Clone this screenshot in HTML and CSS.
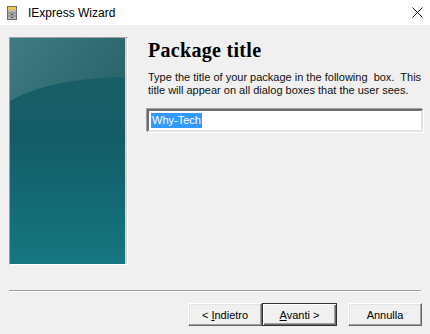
FILE: index.html
```html
<!DOCTYPE html>
<html lang="it">
<head>
    <meta charset="UTF-8">
    <title>IExpress Wizard</title>
    <link rel="stylesheet" href="styles.css">
</head>
<body>
    <div class="titlebar">
        <svg class="app-icon" width="10" height="14" viewBox="0 0 10 14">
            <rect x="0.5" y="0.5" width="9" height="13" fill="#b8b8b8" stroke="#6f6f6f"/>
            <rect x="1" y="1" width="8" height="3" fill="#e8c84a"/>
            <line x1="1" y1="7" x2="9" y2="7" stroke="#7a7a7a"/>
            <line x1="1" y1="10" x2="9" y2="10" stroke="#7a7a7a"/>
            <rect x="4" y="8" width="2" height="1" fill="#444"/>
            <rect x="4" y="11" width="2" height="1" fill="#444"/>
        </svg>
        <span class="title">IExpress Wizard</span>
        <svg class="close" width="11" height="11" viewBox="0 0 11 11">
            <path d="M0.5 0.5 L10.5 10.5 M10.5 0.5 L0.5 10.5" stroke="#111" stroke-width="1"/>
        </svg>
    </div>

    <div class="main">
        <div class="panel">
            <svg width="115" height="226" viewBox="0 0 115 226" preserveAspectRatio="none">
                <defs>
                    <linearGradient id="bg" x1="0" y1="0" x2="0" y2="1">
                        <stop offset="0" stop-color="#1c5e66"/>
                        <stop offset="0.45" stop-color="#135d68"/>
                        <stop offset="1" stop-color="#147780"/>
                    </linearGradient>
                    <linearGradient id="top" x1="0" y1="0" x2="1" y2="0.4">
                        <stop offset="0" stop-color="#3f7c81"/>
                        <stop offset="1" stop-color="#2a666c"/>
                    </linearGradient>
                </defs>
                <rect width="115" height="226" fill="url(#bg)"/>
                <path d="M0 0 H115 V39 Q40 40 0 63 Z" fill="url(#top)"/>
            </svg>
            <div class="panel-edge"></div>
        </div>

        <div class="content">
            <h1>Package title</h1>
            <p class="desc">Type the title of your package in the following&nbsp; box.&nbsp; This<br>title will appear on all dialog boxes that the user sees.</p>
            <div class="field">
                <span class="caret"></span><span class="sel">Why-Tech</span>
            </div>
        </div>
    </div>

    <div class="separator"></div>

    <div class="buttons">
        <button class="btn">&lt; <u>I</u>ndietro</button>
        <button class="btn default"><u>A</u>vanti &gt;</button>
        <button class="btn cancel">Annulla</button>
    </div>
</body>
</html>
```

FILE: styles.css
```css
body {
    margin: 0;
    width: 430px;
    height: 334px;
    overflow: hidden;
    background-color: #f0f0f0;
    font-family: "Liberation Sans", Arial, sans-serif;
    font-size: 11px;
    color: #000;
}

.titlebar {
    height: 25px;
    background-color: #fff;
    display: flex;
    align-items: center;
    padding-left: 7px;
}

.app-icon {
    margin-right: 11px;
}

.title {
    font-size: 12px;
    color: #000;
}

.close {
    margin-left: auto;
    margin-right: 7px;
}

.main {
    display: flex;
    padding: 12px 0 0 9px;
}

.panel {
    display: flex;
    width: 117px;
    height: 226px;
    border: 1px solid;
    border-color: #a0a0a0 #fff #fff #a0a0a0;
}

.panel svg {
    display: block;
}

.panel-edge {
    width: 2px;
    background-color: #d6d6d6;
}

.content {
    margin-left: 19px;
    width: 276px;
}

h1 {
    font-family: "Liberation Serif", "Times New Roman", serif;
    font-size: 20px;
    font-weight: bold;
    letter-spacing: 0.3px;
    margin: 2px 0 0 1px;
    line-height: 23px;
}

.desc {
    margin: 9px 0 0 1px;
    line-height: 13px;
    white-space: nowrap;
    color: #111;
}

.field {
    margin-top: 12px;
    height: 15px;
    padding: 2px 2px;
    background-color: #fff;
    border: 2px solid;
    border-color: #6d6d6d #e3e3e3 #e3e3e3 #6d6d6d;
    box-shadow: -1px -1px 0 #a0a0a0, 1px 1px 0 #fff;
    display: flex;
    align-items: stretch;
}

.caret {
    width: 1px;
    background-color: #d27d1e;
}

.sel {
    background-color: #3399ff;
    color: #fff;
    line-height: 15px;
    padding-right: 1px;
}

.separator {
    margin: 25px 9px 0 9px;
    height: 1px;
    background-color: #a0a0a0;
    border-bottom: 1px solid #fff;
}

.buttons {
    display: flex;
    justify-content: flex-end;
    padding: 11px 8px 0 0;
}

.btn {
    width: 74px;
    height: 23px;
    padding: 0;
    font-family: "Liberation Sans", Arial, sans-serif;
    font-size: 11px;
    color: #000;
    background-color: #f0f0f0;
    border: 1px solid;
    border-color: #fff #696969 #696969 #fff;
    box-shadow: inset -1px -1px 0 #a0a0a0, inset 1px 1px 0 #e3e3e3;
}

.btn.default {
    width: 75px;
    border: 1px solid #303030;
    box-shadow: inset 1px 1px 0 #fff, inset -1px -1px 0 #696969, inset -2px -2px 0 #a0a0a0;
}

.btn.cancel {
    margin-left: 11px;
}
```
